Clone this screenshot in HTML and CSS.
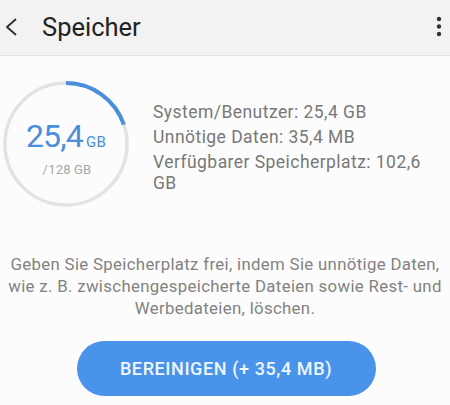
FILE: index.html
```html
<!DOCTYPE html>
<html lang="de">
<head>
<meta charset="utf-8">
<title>Speicher</title>
<link rel="stylesheet" href="styles.css">
</head>
<body>
<div class="screen">
  <header class="appbar">
    <svg class="back" width="14" height="18" viewBox="0 0 14 18"><path d="M11.5 1.5 L3 9 L11.5 16.5" fill="none" stroke="#2a2a2a" stroke-width="1.8" stroke-linecap="round" stroke-linejoin="round"/></svg>
    <h1 class="title">Speicher</h1>
    <svg class="more" width="6" height="22" viewBox="0 0 6 22"><circle cx="3" cy="3" r="2.2" fill="#333"/><circle cx="3" cy="10.5" r="2.2" fill="#333"/><circle cx="3" cy="18" r="2.2" fill="#333"/></svg>
  </header>
  <main class="content">
    <section class="usage">
      <div class="gauge">
        <svg class="ring" width="126" height="126" viewBox="0 0 126 126">
          <circle cx="63" cy="63" r="61" fill="none" stroke="#e3e3e3" stroke-width="3.5"/>
          <circle cx="63" cy="63" r="61" fill="none" stroke="#4a8fdb" stroke-width="4" stroke-dasharray="76 400" transform="rotate(-90 63 63)"/>
        </svg>
        <div class="gauge-text">
          <div class="used"><span class="used-num">25,4</span><span class="used-unit">GB</span></div>
          <div class="total">/128 GB</div>
        </div>
      </div>
      <div class="info">
        <p class="info-line">System/Benutzer: 25,4 GB</p>
        <p class="info-line">Unnötige Daten: 35,4 MB</p>
        <p class="info-line">Verfügbarer Speicherplatz: 102,6 GB</p>
      </div>
    </section>
    <p class="desc">Geben Sie Speicherplatz frei, indem Sie unnötige Daten, wie z. B. zwischengespeicherte Dateien sowie Rest- und Werbedateien, löschen.</p>
    <div class="actions">
      <button class="clean">BEREINIGEN (+ 35,4 MB)</button>
    </div>
  </main>
</div>
</body>
</html>
```

FILE: styles.css
```css
html, body {
  margin: 0;
  padding: 0;
}
body {
  width: 450px;
  height: 405px;
  overflow: hidden;
  background: #fcfcfc;
  font-family: Roboto, "Liberation Sans", sans-serif;
}
.screen {
  display: flex;
  flex-direction: column;
}
.appbar {
  height: 56px;
  box-sizing: border-box;
  background: #f2f2f2;
  border-bottom: 1px solid #e2e2e2;
  display: flex;
  align-items: center;
  padding: 0 8px 0 4px;
}
.back {
  margin-top: -2px;
}
.title {
  margin: -2px 0 0 24px;
  font-size: 25.5px;
  font-weight: 400;
  color: #222;
  flex: 1;
}
.more {
  margin-top: -2px;
}
.content {
  display: flex;
  flex-direction: column;
}
.usage {
  display: flex;
  align-items: flex-start;
  padding: 25px 8px 0 3px;
}
.gauge {
  position: relative;
  width: 126px;
  height: 126px;
  flex: none;
}
.ring {
  position: absolute;
  left: 0;
  top: 0;
}
.gauge-text {
  position: absolute;
  inset: 0;
  display: flex;
  flex-direction: column;
  align-items: center;
  padding-top: 37px;
  box-sizing: border-box;
}
.used {
  display: flex;
  align-items: baseline;
  color: #4a8fdb;
  line-height: 36px;
}
.used-num {
  font-size: 32px;
  letter-spacing: -0.8px;
}
.used-unit {
  font-size: 15px;
  margin-left: 3px;
  letter-spacing: 0.3px;
}
.total {
  margin-top: 2px;
  font-size: 13px;
  letter-spacing: 0.2px;
  color: #a8a8a8;
  margin-left: 2px;
}
.info {
  margin: 21px 0 0 24px;
  width: 286px;
}
.info-line {
  margin: 0 0 4px 0;
  font-size: 17.5px;
  letter-spacing: 0.45px;
  line-height: 21px;
  color: #787878;
}
.desc {
  margin: 46px 0 0 0;
  font-size: 16.8px;
  letter-spacing: 0.33px;
  line-height: 22px;
  color: #828282;
  text-align: center;
}
.actions {
  display: flex;
  justify-content: center;
  padding-top: 22px;
}
.clean {
  width: 299px;
  height: 55px;
  border: none;
  border-radius: 28px;
  background: #4a93ea;
  color: #eef6ff;
  font-family: Roboto, "Liberation Sans", sans-serif;
  font-size: 18px;
  letter-spacing: 0.6px;
  font-weight: 500;
  margin-left: 2px;
}
```
